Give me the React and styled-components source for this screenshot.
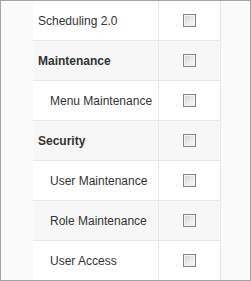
import React from 'react';
import styled, { createGlobalStyle } from 'styled-components';

const GlobalStyle = createGlobalStyle`
  html, body {
    margin: 0;
    padding: 0;
    background: #ffffff;
  }
`;

const Frame = styled.div`
  box-sizing: border-box;
  width: 251px;
  height: 281px;
  border: 1px solid #a3a3a3;
  background: #fafafa;
  overflow: hidden;
  padding-left: 32px;
`;

const Table = styled.div`
  width: 188px;
  box-sizing: border-box;
  border-right: 1px solid #e8e8e8;
  background: #ffffff;
`;

const Row = styled.div`
  display: grid;
  grid-template-columns: 126px 1fr;
  height: 40px;
  box-sizing: border-box;
  border-bottom: 1px solid #e8e8e8;
  background: ${props => (props.$striped ? '#f7f7f7' : '#ffffff')};
`;

const NameCell = styled.div`
  display: flex;
  align-items: center;
  padding-left: ${props => (props.$level === 2 ? '17px' : '5px')};
  border-right: 1px solid #e8e8e8;
  font-family: 'Liberation Sans', Arial, sans-serif;
  font-size: 12px;
  font-weight: ${props => (props.$bold ? 700 : 400)};
  color: #333333;
  white-space: nowrap;
`;

const CheckCell = styled.div`
  display: flex;
  align-items: center;
  justify-content: center;
`;

const Box = styled.input.attrs({ type: 'checkbox' })`
  appearance: none;
  margin: 0;
  width: 13px;
  height: 13px;
  box-sizing: border-box;
  border: 1px solid #858585;
  box-shadow: inset 0 0 0 1px #f4f4f4;
  background: linear-gradient(135deg, #cfd2d7 0%, #e9ebee 55%, #ffffff 100%);
  cursor: pointer;
`;

const permissions = [
  { name: 'Scheduling 2.0', level: 1 },
  { name: 'Maintenance', level: 1, bold: true },
  { name: 'Menu Maintenance', level: 2 },
  { name: 'Security', level: 1, bold: true },
  { name: 'User Maintenance', level: 2 },
  { name: 'Role Maintenance', level: 2 },
  { name: 'User Access', level: 2 },
];

const App = () => (
  <>
    <GlobalStyle />
    <Frame>
      <Table>
        {permissions.map((p, i) => (
          <Row key={p.name} $striped={i % 2 === 1}>
            <NameCell $level={p.level} $bold={p.bold}>{p.name}</NameCell>
            <CheckCell>
              <Box aria-label={p.name} />
            </CheckCell>
          </Row>
        ))}
      </Table>
    </Frame>
  </>
);

export default App;
